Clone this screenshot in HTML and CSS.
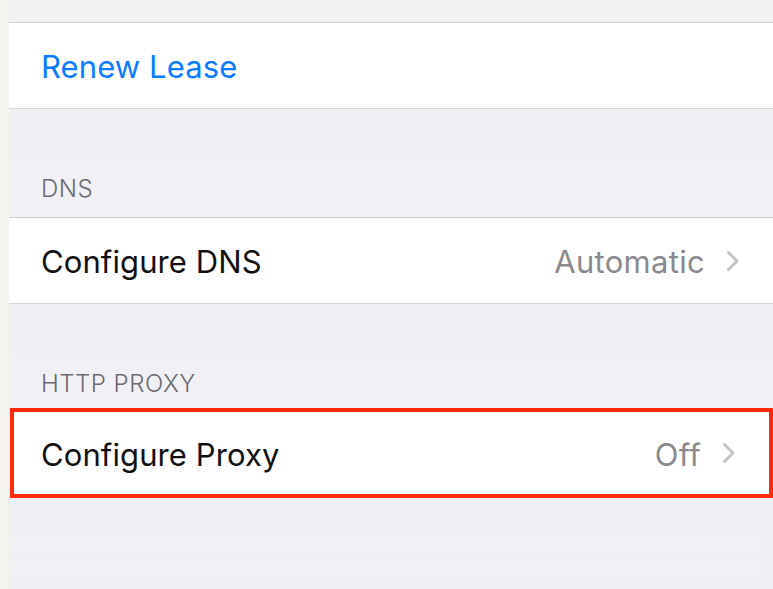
FILE: index.html
```html
<!DOCTYPE html>
<html lang="en">
<head>
  <meta charset="UTF-8">
  <meta name="viewport" content="width=device-width, initial-scale=1.0">
  <title>Wi-Fi Settings</title>
  <link rel="stylesheet" href="styles.css">
</head>
<body>
  <div class="screen">
    <div class="status-gap"></div>

    <div class="row">
      <span class="row-label action">Renew Lease</span>
    </div>

    <div class="section-header">
      <span class="header-text">DNS</span>
    </div>
    <div class="row">
      <span class="row-label">Configure DNS</span>
      <span class="row-value">Automatic</span>
      <svg class="chevron" width="14" height="22" viewBox="0 0 14 22">
        <path d="M2.5 2.5 L11 11 L2.5 19.5" />
      </svg>
    </div>

    <div class="section-header">
      <span class="header-text">HTTP PROXY</span>
    </div>
    <div class="row selected">
      <span class="row-label">Configure Proxy</span>
      <span class="row-value">Off</span>
      <svg class="chevron" width="14" height="22" viewBox="0 0 14 22">
        <path d="M2.5 2.5 L11 11 L2.5 19.5" />
      </svg>
    </div>

    <div class="footer">
      <div class="ghost-line"></div>
      <div class="ghost-line"></div>
    </div>
  </div>
</body>
</html>
```

FILE: styles.css
```css
html, body {
  margin: 0;
  padding: 0;
  height: 100%;
}
body {
  background-color: #f4f3ee;
  font-family: "Inter", "Noto Sans", sans-serif;
  overflow: hidden;
}
.screen {
  margin-left: 9px;
  min-height: 100%;
  background-color: #efeff4;
  display: flex;
  flex-direction: column;
}
.status-gap {
  height: 22px;
  background-color: #f2f2f2;
}
.row {
  box-sizing: border-box;
  height: 87px;
  display: flex;
  align-items: center;
  padding: 0 33px 0 32px;
  background: #fff;
  border-top: 1px solid #cfced3;
  border-bottom: 1px solid #d6d5da;
}
.row-label {
  flex: 1;
  font-size: 31px;
  color: #111;
  letter-spacing: 0.1px;
  padding-top: 2px;
}
.row-label.action {
  color: #0b7cff;
}
.row-value {
  font-size: 31px;
  color: #8a8a8e;
  letter-spacing: 0.3px;
  margin-right: 21px;
  padding-top: 2px;
}
.chevron path {
  fill: none;
  stroke: #c4c4c8;
  stroke-width: 3;
  stroke-linecap: round;
  stroke-linejoin: round;
}
.section-header {
  box-sizing: border-box;
  height: 108px;
  display: flex;
  align-items: flex-end;
  padding: 0 0 14px 32px;
  background: linear-gradient(#efeff4 0, #efeff4 53px, #f1f1f5 53px);
}
.header-text {
  font-size: 24px;
  font-weight: 300;
  color: #6a6a6f;
  letter-spacing: 0.5px;
}
.row.selected {
  height: 90px;
  margin: -4px 0 0 1px;
  padding-left: 27px;
  border: 4px solid #ff2b0c;
}
.footer {
  padding-top: 41px;
  display: flex;
  flex-direction: column;
  gap: 15px;
}
.ghost-line {
  height: 9px;
  width: 749px;
  background-color: #f2f2f5;
}
```
